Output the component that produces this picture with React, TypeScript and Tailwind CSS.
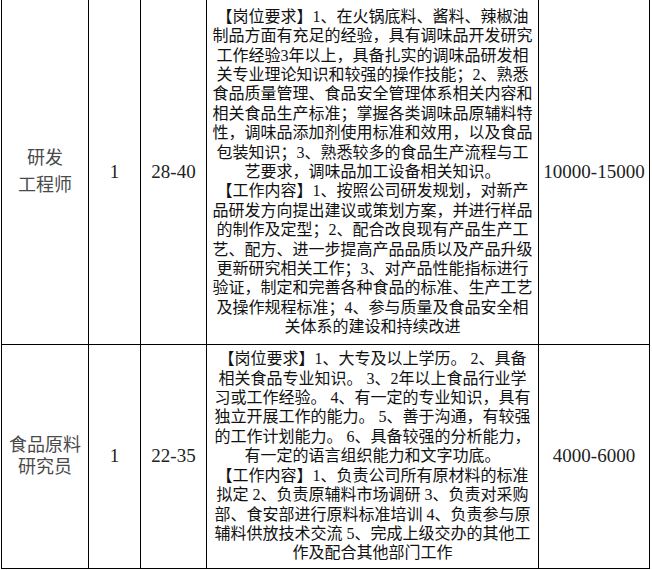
const rows = [
  {
    title: ['研发', '工程师'],
    titleLeading: 'leading-[27px]',
    count: '1',
    age: '28-40',
    salary: '10000-15000',
    height: 'h-[344px]',
    lines: [
      '【岗位要求】1、在火锅底料、酱料、辣椒油',
      '制品方面有充足的经验，具有调味品开发研究',
      '工作经验3年以上，具备扎实的调味品研发相',
      '关专业理论知识和较强的操作技能；2、熟悉',
      '食品质量管理、食品安全管理体系相关内容和',
      '相关食品生产标准；掌握各类调味品原辅料特',
      '性，调味品添加剂使用标准和效用，以及食品',
      '包装知识；3、熟悉较多的食品生产流程与工',
      '艺要求，调味品加工设备相关知识。',
      '【工作内容】1、按照公司研发规划，对新产',
      '品研发方向提出建议或策划方案，并进行样品',
      '的制作及定型；2、配合改良现有产品生产工',
      '艺、配方、进一步提高产品品质以及产品升级',
      '更新研究相关工作；3、对产品性能指标进行',
      '验证，制定和完善各种食品的标准、生产工艺',
      '及操作规程标准；4、参与质量及食品安全相',
      '关体系的建设和持续改进',
    ],
  },
  {
    title: ['食品原料', '研究员'],
    titleLeading: 'leading-[22px]',
    count: '1',
    age: '22-35',
    salary: '4000-6000',
    height: 'h-[224px]',
    lines: [
      '【岗位要求】1、大专及以上学历。 2、具备',
      '相关食品专业知识。 3、2年以上食品行业学',
      '习或工作经验。 4、有一定的专业知识，具有',
      '独立开展工作的能力。 5、善于沟通，有较强',
      '的工作计划能力。 6、具备较强的分析能力，',
      '有一定的语言组织能力和文字功底。',
      '【工作内容】1、负责公司所有原材料的标准',
      '拟定 2、负责原辅料市场调研 3、负责对采购',
      '部、食安部进行原料标准培训 4、负责参与原',
      '辅料供放技术交流 5、完成上级交办的其他工',
      '作及配合其他部门工作',
    ],
  },
];

const font = 'font-["Liberation_Serif","Noto_Sans_CJK_SC",serif]';

export default function App() {
  return (
    <div className={`w-[652px] h-[570px] bg-white overflow-hidden ${font}`}>
      <table className="ml-px w-[648px] table-fixed border-collapse">
        <colgroup>
          <col className="w-[87px]" />
          <col className="w-[52px]" />
          <col className="w-[66px]" />
          <col className="w-[332px]" />
          <col className="w-[111px]" />
        </colgroup>
        <tbody>
          {rows.map((row, i) => (
            <tr key={row.age} className={row.height}>
              <td
                className={`border border-black p-0 text-center align-middle text-[18px] text-[#4a4a4a] ${row.titleLeading} ${i === 0 ? 'border-t-0' : ''}`}
              >
                {row.title.map((t) => (
                  <div key={t}>{t}</div>
                ))}
              </td>
              <td className={`border border-black p-0 text-center align-middle text-[19px] text-[#222] ${i === 0 ? 'border-t-0' : ''}`}>
                {row.count}
              </td>
              <td className={`border border-black p-0 text-center align-middle text-[19px] text-[#222] ${i === 0 ? 'border-t-0' : ''}`}>
                {row.age}
              </td>
              <td className={`border border-black p-0 text-center align-middle text-[16px] leading-[19.4px] text-[#111] ${i === 0 ? 'border-t-0' : ''}`}>
                {row.lines.map((l, j) => (
                  <div key={j} className="whitespace-pre">
                    {l}
                  </div>
                ))}
              </td>
              <td className={`border border-black p-0 text-center align-middle text-[19px] text-[#222] ${i === 0 ? 'border-t-0' : ''}`}>
                {row.salary}
              </td>
            </tr>
          ))}
        </tbody>
      </table>
    </div>
  );
}
